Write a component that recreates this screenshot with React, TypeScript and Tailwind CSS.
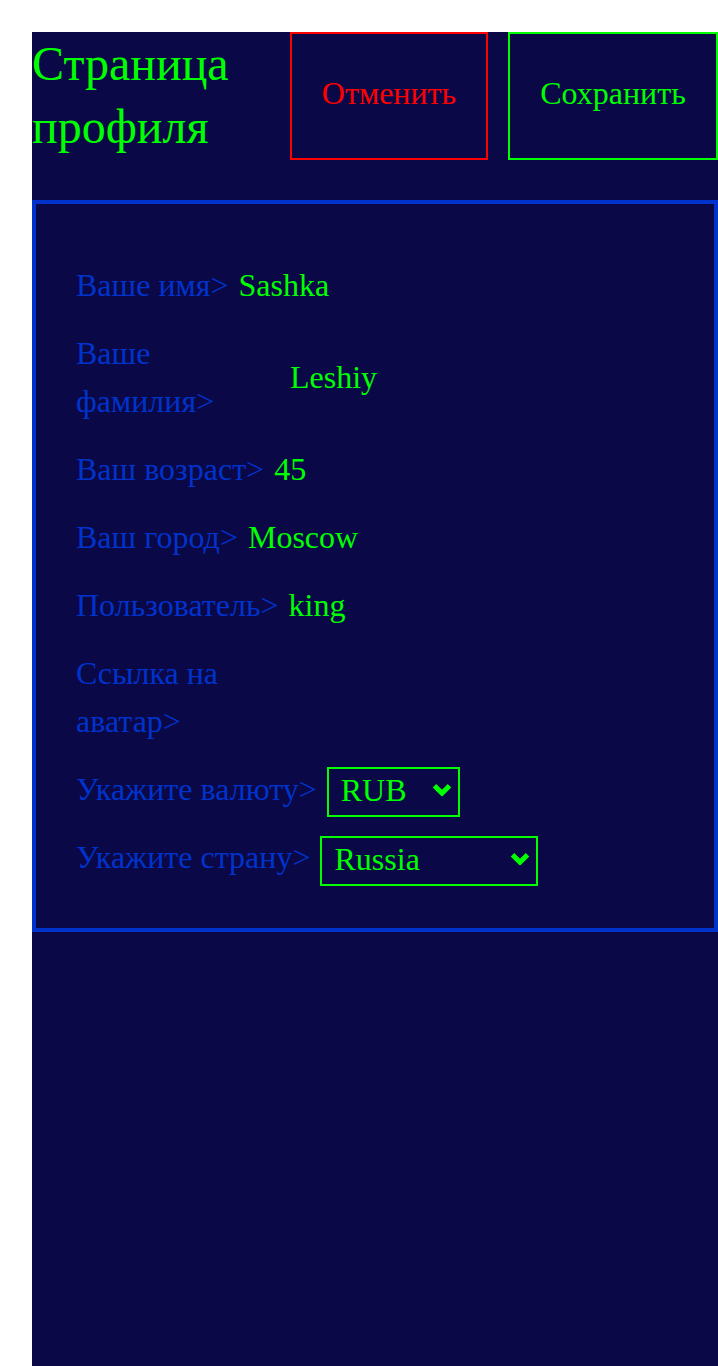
import { useState } from "react";

type Row = {
  label: string;
  value: string;
  wrap?: boolean;
};

const rows: Row[] = [
  { label: "Ваше имя>", value: "Sashka" },
  { label: "Ваше фамилия>", value: "Leshiy", wrap: true },
  { label: "Ваш возраст>", value: "45" },
  { label: "Ваш город>", value: "Moscow" },
  { label: "Пользователь>", value: "king" },
  { label: "Ссылка на аватар>", value: "", wrap: true },
];

function Chevron() {
  return (
    <svg
      width="20"
      height="13"
      viewBox="0 0 20 13"
      className="pointer-events-none absolute top-1/2 -translate-y-[60%] right-[8px]"
    >
      <path d="M2.5 2.5 L10 10 L17.5 2.5" fill="none" stroke="#00ff00" strokeWidth="5" />
    </svg>
  );
}

export default function App() {
  const [currency, setCurrency] = useState("RUB");
  const [country, setCountry] = useState("Russia");

  return (
    <div className="min-h-screen bg-white pt-8 pl-8 font-['Liberation_Serif',serif]">
      <div className="w-[686px] min-h-[1334px] bg-[#0a0846]">
        <div className="flex items-start">
          <h1 className="w-[258px] text-[48px] leading-[63px] text-[#00ff00]">
            Страница профиля
          </h1>
          <button className="w-[198px] h-[128px] pb-[6px] border-2 border-[#ff0000] text-[32px] text-[#ff0000]">
            Отменить
          </button>
          <button className="ml-5 w-[210px] h-[128px] pb-[6px] border-2 border-[#00ff00] text-[32px] text-[#00ff00]">
            Сохранить
          </button>
        </div>

        <div className="mt-10 border-4 border-[#0033cc] pt-[57px] px-10 pb-[47px] flex flex-col gap-5 text-[32px] leading-[48px]">
          {rows.map((r) => (
            <div key={r.label} className="flex items-center gap-[10px]">
              <span className={`text-[#0033cc] ${r.wrap ? "w-[204px]" : ""}`}>{r.label}</span>
              <span className="text-[#00ff00]">{r.value}</span>
            </div>
          ))}

          <div className="flex items-start gap-[10px] h-12">
            <span className="text-[#0033cc]">Укажите валюту&gt;</span>
            <div className="relative mt-[1px]">
              <select
                value={currency}
                onChange={(e) => setCurrency(e.target.value)}
                className="appearance-none w-[133px] h-[50px] pb-[3px] border-2 border-[#00ff00] bg-transparent text-[#00ff00] text-[32px] leading-[40px] pl-[12px] outline-none"
              >
                <option className="bg-[#0a0846]">RUB</option>
                <option className="bg-[#0a0846]">USD</option>
                <option className="bg-[#0a0846]">EUR</option>
              </select>
              <Chevron />
            </div>
          </div>

          <div className="flex items-start gap-[10px] h-12">
            <span className="text-[#0033cc]">Укажите страну&gt;</span>
            <div className="relative mt-[2px]">
              <select
                value={country}
                onChange={(e) => setCountry(e.target.value)}
                className="appearance-none w-[218px] h-[50px] pb-[3px] border-2 border-[#00ff00] bg-transparent text-[#00ff00] text-[32px] leading-[40px] pl-[12px] outline-none"
              >
                <option className="bg-[#0a0846]">Russia</option>
                <option className="bg-[#0a0846]">Belarus</option>
                <option className="bg-[#0a0846]">Kazakhstan</option>
              </select>
              <Chevron />
            </div>
          </div>
        </div>
      </div>
    </div>
  );
}
